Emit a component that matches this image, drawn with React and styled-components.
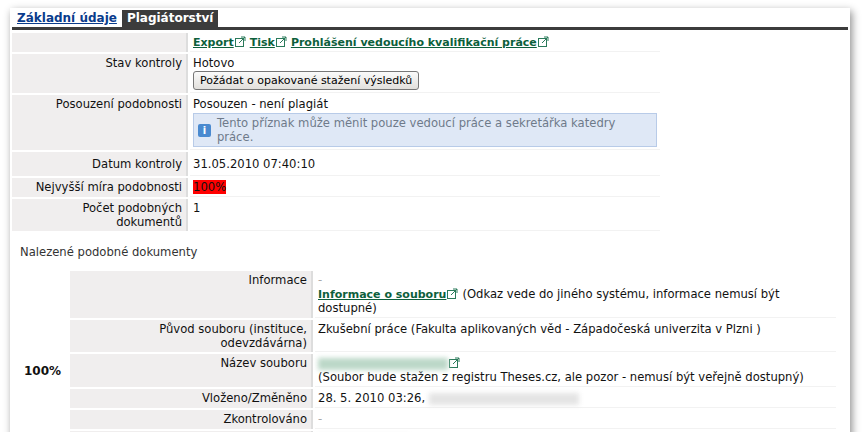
import React from "react";
import styled, { createGlobalStyle } from "styled-components";

const Global = createGlobalStyle`
  body { margin: 0; background: #fff; font-family: Verdana, "DejaVu Sans", sans-serif; font-size: 11.6px; color: #111; }
`;

const Frame = styled.div`
  margin: 8px 15px 0 10px;
  width: 840px;
  min-height: 410px;
  background: #fff;
  box-shadow: 2px 3px 8px rgba(0,0,0,0.45);
  box-sizing: border-box;
  padding: 2px 2px 8px 2px;
`;

const Tabs = styled.div`
  display: flex;
  border-bottom: 3px solid #3c3c3c;
  height: 17px;
`;

const Tab = styled.a`
  padding: 1px 5px 0;
  font-weight: bold;
  font-size: 12px;
  ${(p) => (p.$active ? "background:#3c3c3c;color:#fff;" : "color:#0a3c8c;text-decoration:underline;")}
`;

const Table = styled.div`
  display: grid;
  grid-template-columns: ${(p) => p.$cols};
  gap: 2px;
  margin-top: ${(p) => p.$mt || 0}px;
`;

const Label = styled.div`
  background: #f0eeee;
  text-align: right;
  padding: 2px 4px 2px;
  border-right: 2px solid #ddd;
`;

const Value = styled.div`
  padding: 2px 3px 2px;
  border-bottom: 1px solid #f2f2f2;
`;

const Link = styled.a`
  color: #0d5f3c;
  font-weight: bold;
  font-size: 11px;
  text-decoration: underline;
`;

const Ext = () => (
  <svg width="11" height="11" viewBox="0 0 11 11" style={{ margin: "0 4px 0 1px", verticalAlign: "-1px" }}>
    <rect x="0.5" y="2.5" width="8" height="8" fill="#fff" stroke="#2a7a5a" />
    <path d="M4 7 L10 1 M6 1 H10 V5" stroke="#2a7a5a" fill="none" />
  </svg>
);

const Button = styled.button`
  font: inherit;
  font-size: 11px;
  margin-top: 1px;
  padding: 2px 6px;
  border: 1px solid #777;
  border-radius: 3px;
  background: linear-gradient(#fafafa, #e2e0dc);
`;

const Info = styled.div`
  display: inline-flex;
  align-items: center;
  gap: 6px;
  margin-top: 2px;
  padding: 2px 4px;
  background: #dfe8f6;
  border: 1px solid #b8cbe8;
  color: #6e7a8a;
`;

const InfoIcon = styled.span`
  width: 13px; height: 13px; background: #4a8ad0; color: #fff;
  font-weight: bold; font-size: 10px; display: inline-flex; align-items: center; justify-content: center; border-radius: 2px;
`;

const Red = styled.span`background: #f00;`;
const Blur = styled.span`
  display: inline-block; filter: blur(2.5px);
  background: ${(p) => p.$bg || "transparent"}; width: ${(p) => p.$w}px; vertical-align: middle; height: 12px;
`;
const Dash = styled.div`color: #aaa;`;
const Section = styled.div`padding: 14px 0 0 8px; color: #333;`;
const Pct = styled.div`
  grid-row: span 7; display: flex; align-items: center; font-weight: bold; font-size: 12px; padding-left: 12px;
`;

export default function App() {
  return (
    <Frame>
      <Global />
      <Tabs>
        <Tab>Základní údaje</Tab>
        <Tab $active>Plagiátorství</Tab>
      </Tabs>
      <Table $cols="176px 470px" $mt={3}>
        <Label />
        <Value>
          <Link>Export</Link><Ext /><Link>Tisk</Link><Ext /><Link>Prohlášení vedoucího kvalifikační práce</Link><Ext />
        </Value>
        <Label>Stav kontroly</Label>
        <Value>Hotovo<br /><Button>Požádat o opakované stažení výsledků</Button></Value>
        <Label>Posouzení podobnosti</Label>
        <Value>Posouzen - není plagiát<br /><Info><InfoIcon>i</InfoIcon>Tento příznak může měnit pouze vedoucí práce a sekretářka katedry práce.</Info></Value>
        <Label style={{ paddingTop: 5, paddingBottom: 5 }}>Datum kontroly</Label>
        <Value style={{ paddingTop: 5 }}>31.05.2010 07:40:10</Value>
        <Label>Nejvyšší míra podobnosti</Label>
        <Value><Red>100%</Red></Value>
        <Label>Počet podobných dokumentů</Label>
        <Value>1</Value>
      </Table>
      <Section>Nalezené podobné dokumenty</Section>
      <Table $cols="56px 243px 521px" $mt={12}>
        <Pct>100%</Pct>
        <Label>Informace</Label>
        <Value><Dash>-</Dash><Link>Informace o souboru</Link><Ext />(Odkaz vede do jiného systému, informace nemusí být dostupné)</Value>
        <Label>Původ souboru (instituce, odevzdávárna)</Label>
        <Value>Zkušební práce (Fakulta aplikovaných věd - Západočeská univerzita v Plzni )</Value>
        <Label>Název souboru</Label>
        <Value><Blur $bg="#bcd8c8" $w={130} /><Ext /><br />(Soubor bude stažen z registru Theses.cz, ale pozor - nemusí být veřejně dostupný)</Value>
        <Label>Vloženo/Změněno</Label>
        <Value>28. 5. 2010 03:26, <Blur $bg="#e4e4e4" $w={150} /></Value>
        <Label>Zkontrolováno</Label>
        <Value><Dash>-</Dash></Value>
        <Label>Autor</Label>
        <Value><Blur $bg="#e6e6e6" $w={90} /></Value>
        <Label>Podobnost se zkoumaným souborem</Label>
        <Value><Red>100%</Red> (<Link>Zobrazit podobnosti</Link><Ext />)</Value>
      </Table>
    </Frame>
  );
}
